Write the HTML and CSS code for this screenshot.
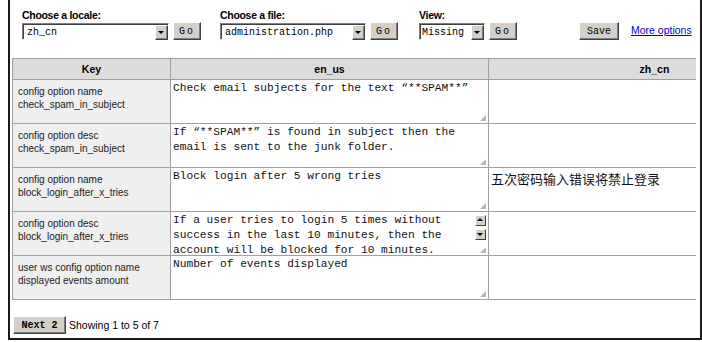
FILE: index.html
```html
<!DOCTYPE html>
<html lang="en">
<head>
    <meta charset="UTF-8">
    <title>Translation editor</title>
    <link rel="stylesheet" href="styles.css">
</head>
<body>
    <div class="frame">
        <div class="toolbar">
            <div class="field">
                <label>Choose a locale:</label>
                <div class="controls">
                    <div class="select locale"><span>zh_cn</span><i class="arrow"></i></div>
                    <button class="btn go">Go</button>
                </div>
            </div>
            <div class="field file">
                <label>Choose a file:</label>
                <div class="controls">
                    <div class="select filename"><span>administration.php</span><i class="arrow"></i></div>
                    <button class="btn go">Go</button>
                </div>
            </div>
            <div class="field view">
                <label>View:</label>
                <div class="controls">
                    <div class="select mode"><span>Missing</span><i class="arrow"></i></div>
                    <button class="btn go">Go</button>
                </div>
            </div>
            <button class="btn save">Save</button>
            <a href="#" class="more">More options</a>
        </div>

        <div class="grid-wrap">
            <table class="grid">
                <colgroup>
                    <col class="col-key">
                    <col class="col-src">
                    <col class="col-dst">
                </colgroup>
                <thead>
                    <tr><th>Key</th><th>en_us</th><th>zh_cn</th></tr>
                </thead>
                <tbody>
                    <tr>
                        <td class="key">config option name<br>check_spam_in_subject</td>
                        <td><div class="text">Check email subjects for the text “**SPAM**”<span class="grip"></span></div></td>
                        <td><div class="text cn"></div></td>
                    </tr>
                    <tr>
                        <td class="key">config option desc<br>check_spam_in_subject</td>
                        <td><div class="text">If “**SPAM**” is found in subject then the
email is sent to the junk folder.<span class="grip"></span></div></td>
                        <td><div class="text cn"></div></td>
                    </tr>
                    <tr>
                        <td class="key">config option name<br>block_login_after_x_tries</td>
                        <td><div class="text">Block login after 5 wrong tries<span class="grip"></span></div></td>
                        <td><div class="text cn">五次密码输入错误将禁止登录</div></td>
                    </tr>
                    <tr>
                        <td class="key">config option desc<br>block_login_after_x_tries</td>
                        <td><div class="text">If a user tries to login 5 times without
success in the last 10 minutes, then the
account will be blocked for 10 minutes.<span class="scroll"><i class="up"></i><i class="down"></i></span><span class="grip"></span></div></td>
                        <td><div class="text cn"></div></td>
                    </tr>
                    <tr>
                        <td class="key">user ws config option name<br>displayed events amount</td>
                        <td><div class="text">Number of events displayed<span class="grip"></span></div></td>
                        <td><div class="text cn"></div></td>
                    </tr>
                </tbody>
            </table>
        </div>

        <div class="pager">
            <button class="btn next">Next 2</button>
            <span>Showing 1 to 5 of 7</span>
        </div>
    </div>
</body>
</html>
```

FILE: styles.css
```css
body {
    margin: 0;
    background: #fff;
    color: #000;
    font-family: "Liberation Sans", Arial, sans-serif;
    font-size: 10.5px;
}
.frame {
    margin-left: 8px;
    height: 340px;
    box-sizing: border-box;
    border-left: 2px solid #1a1a1a;
    border-right: 2px solid #1a1a1a;
    border-bottom: 2px solid #1a1a1a;
    padding-top: 9px;
}
.toolbar {
    display: flex;
    align-items: flex-end;
    padding-left: 12px;
}
.field label {
    display: block;
    font-weight: bold;
    letter-spacing: -0.3px;
    line-height: 12px;
    margin-bottom: 1px;
}
.field.file {
    margin-left: 19px;
}
.field.view {
    margin-left: 21px;
}
.controls {
    display: flex;
    align-items: flex-end;
    gap: 4px;
}
.btn {
    height: 18px;
    padding: 0 6px;
    font-family: "Liberation Mono", "Courier New", monospace;
    font-size: 10px;
    color: #000;
    background: #d4d0c8;
    border: 1px solid;
    border-color: #fff #404040 #404040 #fff;
    box-shadow: inset -1px -1px #808080;
    cursor: pointer;
}
.btn.go {
    width: 28px;
    padding: 0;
    letter-spacing: 2px;
}
.btn.save {
    width: 40px;
    padding: 0;
    margin-left: 62px;
}
.more {
    margin-left: 12px;
    margin-bottom: 4px;
    color: #0000cc;
    font-size: 10.5px;
}
.select {
    display: flex;
    align-items: center;
    justify-content: space-between;
    height: 17px;
    box-sizing: border-box;
    background: #fff;
    border: 1px solid;
    border-color: #808080 #fff #fff #808080;
    box-shadow: inset 1px 1px #404040;
    padding: 1px 0 0 4px;
    font-family: "Liberation Mono", "Courier New", monospace;
    font-size: 10px;
}
.select.locale {
    width: 147px;
}
.select.filename {
    width: 146px;
}
.select.mode {
    width: 66px;
    padding-left: 2px;
}
.arrow {
    position: relative;
    width: 11px;
    height: 13px;
    background: #d4d0c8;
    border: 1px solid;
    border-color: #fff #404040 #404040 #fff;
    box-shadow: inset -1px -1px #808080;
}
.arrow::after {
    content: "";
    position: absolute;
    left: 2px;
    top: 5px;
    border-left: 3px solid transparent;
    border-right: 3px solid transparent;
    border-top: 3px solid #000;
}
.grid-wrap {
    margin: 18px 4px 0 2px;
    overflow: hidden;
}
.grid {
    width: 808px;
    table-layout: fixed;
    border-collapse: collapse;
}
.col-key {
    width: 158px;
}
.col-src {
    width: 318px;
}
.col-dst {
    width: 332px;
}
.grid th,
.grid td {
    border: 1px solid #a0a0a0;
    padding: 0;
}
.grid th {
    height: 20px;
    background: #dcdcdc;
    font-weight: bold;
    text-align: center;
}
.grid td {
    vertical-align: top;
}
.grid td.key {
    background: #efefef;
    color: #222;
    font-size: 10px;
    line-height: 13px;
    padding: 5px 0 0 5px;
}
.text {
    position: relative;
    height: 43px;
    box-sizing: border-box;
    padding: 1px 2px;
    overflow: hidden;
    white-space: pre;
    font-family: "Liberation Mono", "Courier New", monospace;
    font-size: 11.2px;
    line-height: 15px;
    color: #111;
}
.text.cn {
    padding-top: 3px;
    font-family: "Noto Sans CJK SC", sans-serif;
    font-size: 13px;
}
.grip {
    position: absolute;
    right: 2px;
    bottom: 2px;
    width: 6px;
    height: 6px;
    background:
        radial-gradient(circle, #b8b8b8 0.8px, transparent 0.9px) 0 0 / 2px 2px;
    clip-path: polygon(100% 0, 100% 100%, 0 100%);
}
.scroll {
    position: absolute;
    right: 2px;
    top: 3px;
    display: flex;
    flex-direction: column;
    gap: 3px;
}
.scroll i {
    position: relative;
    width: 9px;
    height: 9px;
    background: #d4d0c8;
    border: 1px solid;
    border-color: #fff #404040 #404040 #fff;
}
.scroll i::after {
    content: "";
    position: absolute;
    left: 1px;
    border-left: 3px solid transparent;
    border-right: 3px solid transparent;
}
.scroll .up::after {
    top: 2px;
    border-bottom: 3px solid #000;
}
.scroll .down::after {
    top: 3px;
    border-top: 3px solid #000;
}
.pager {
    display: flex;
    align-items: center;
    gap: 3px;
    margin: 16px 0 0 3px;
}
.btn.next {
    width: 53px;
    padding: 0;
    font-weight: bold;
}
.pager span {
    font-size: 10.5px;
}
```
